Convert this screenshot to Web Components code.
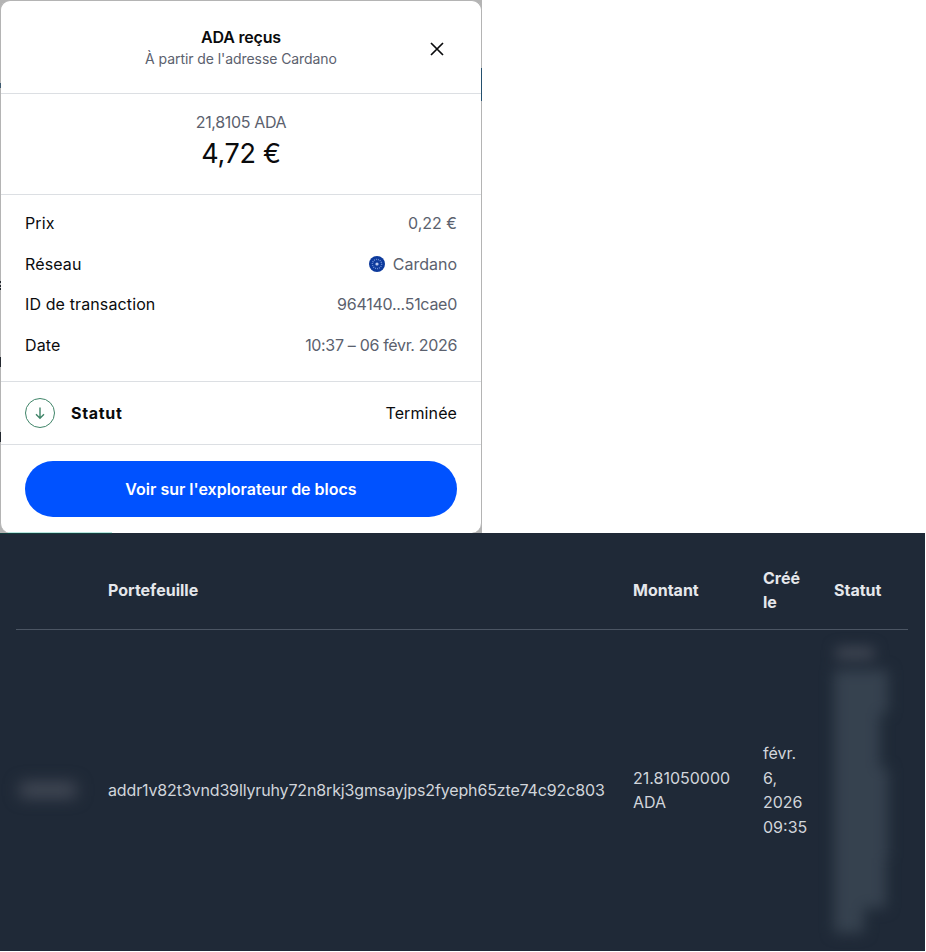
<!DOCTYPE html>
<html lang="fr">
<head>
<meta charset="utf-8">
<title>ADA reçus</title>
<style>
    html, body { margin: 0; padding: 0; background: #fff; }
    body { width: 926px; height: 952px; overflow: hidden; font-family: Inter, "Liberation Sans", sans-serif; }
</style>
</head>
<body>
<tx-modal>
    <detail-row label="Prix">0,22 €</detail-row>
    <detail-row label="Réseau"><cardano-icon></cardano-icon>Cardano</detail-row>
    <detail-row label="ID de transaction" tight="-0.27px">964140...51cae0</detail-row>
    <detail-row label="Date" tight="-0.33px">10:37 – 06 févr. 2026</detail-row>
</tx-modal>
<wallet-table></wallet-table>

<script>
const txModalTemplate = document.createElement('template');
txModalTemplate.innerHTML = `
    <style>
        :host {
            display: block;
            height: 533px;
            background-color: white;
            font-family: Inter, "Liberation Sans", sans-serif;
            position: relative;
        }

        .frame {
            width: 482px;
            height: 533px;
            background-color: #b4b4b4;
        }

        .edge {
            position: absolute;
            left: 481px;
            top: 68px;
            width: 1px;
            height: 33px;
            background-color: #24506e;
            z-index: 1;
        }

        .mark {
            position: absolute;
            left: 0;
            width: 1px;
            background-color: #23282f;
            z-index: 1;
        }

        .tab {
            position: absolute;
            left: 8px;
            bottom: 0;
            width: 104px;
            height: 1px;
            background-color: #b9e6df;
        }

        .modal {
            width: 482px;
            height: 533px;
            box-sizing: border-box;
            border: 1px solid #b4b4b4;
            border-bottom: none;
            border-radius: 10px;
            background-color: white;
            display: flex;
            flex-direction: column;
        }

        .head {
            height: 93px;
            flex: none;
            box-sizing: border-box;
            padding-top: 25px;
            text-align: center;
            border-bottom: 1px solid #dcdfe3;
            position: relative;
        }

        .head h1 {
            margin: 0;
            font-size: 16px;
            line-height: 22px;
            font-weight: 600;
            letter-spacing: -0.2px;
            color: #0a0b0d;
        }

        .head p {
            margin: 0;
            font-size: 14px;
            line-height: 21px;
            letter-spacing: -0.07px;
            color: #5b616e;
        }

        .close {
            position: absolute;
            left: 428px;
            top: 40px;
            width: 16px;
            height: 16px;
        }

        .amount {
            height: 101px;
            flex: none;
            box-sizing: border-box;
            padding-top: 18px;
            text-align: center;
            border-bottom: 1px solid #dcdfe3;
        }

        .amount .crypto {
            font-size: 16px;
            line-height: 21px;
            letter-spacing: -0.35px;
            color: #5b616e;
        }

        .amount .fiat {
            font-size: 27px;
            line-height: 42px;
            letter-spacing: -0.3px;
            color: #0a0b0d;
        }

        .rows {
            height: 187px;
            flex: none;
            box-sizing: border-box;
            padding: 7.6px 24px 0;
            border-bottom: 1px solid #dcdfe3;
        }

        .status {
            height: 63px;
            flex: none;
            box-sizing: border-box;
            padding: 0 24px;
            display: flex;
            align-items: center;
            gap: 16px;
            border-bottom: 1px solid #dcdfe3;
            font-size: 16px;
            color: #0a0b0d;
        }

        .status svg {
            width: 30px;
            height: 30px;
            flex: none;
        }

        .status b {
            font-weight: 700;
            letter-spacing: 0.7px;
            flex: 1;
        }

        .status span {
            letter-spacing: 0.1px;
        }

        .foot {
            padding: 16px 24px 0;
        }

        .foot button {
            width: 100%;
            height: 56px;
            display: block;
            border: none;
            border-radius: 28px;
            background-color: #0052ff;
            color: white;
            font: 600 16px Inter, "Liberation Sans", sans-serif;
        }
    </style>
    <div class="edge"></div>
    <div class="mark" style="top:83px;height:5px;background:#3d5a70"></div>
    <div class="mark" style="top:281px;height:2px"></div>
    <div class="mark" style="top:285px;height:2px"></div>
    <div class="mark" style="top:288px;height:2px"></div>
    <div class="mark" style="top:357px;height:10px"></div>
    <div class="mark" style="top:432px;height:10px"></div>
    <div class="frame">
        <div class="modal">
            <div class="head">
                <h1>ADA reçus</h1>
                <p>À partir de l'adresse Cardano</p>
                <svg class="close" viewBox="0 0 16 16" fill="none" stroke="#0a0b0d" stroke-width="1.7">
                    <path d="M2 2L14 14M14 2L2 14"/>
                </svg>
            </div>
            <div class="amount">
                <div class="crypto">21,8105 ADA</div>
                <div class="fiat">4,72 €</div>
            </div>
            <div class="rows"><slot></slot></div>
            <div class="status">
                <svg viewBox="0 0 30 30" fill="none">
                    <circle cx="15" cy="15" r="14.5" stroke="#3f8468"/>
                    <path d="M15 9.5V20M11 16.2L15 20.2L19 16.2" stroke="#3f8468" stroke-width="1.4"/>
                </svg>
                <b>Statut</b>
                <span>Terminée</span>
            </div>
            <div class="foot"><button>Voir sur l'explorateur de blocs</button></div>
        </div>
    </div>
    <div class="tab"></div>
`;

class TxModal extends HTMLElement {
    constructor(){
        super();
        this.attachShadow( { mode:"open" } );
        this.shadowRoot.appendChild( txModalTemplate.content.cloneNode( true ) );
    }
}

const detailRowTemplate = document.createElement('template');
detailRowTemplate.innerHTML = `
    <style>
        :host {
            display: flex;
            justify-content: space-between;
            align-items: center;
            height: 40.7px;
            font-size: 16px;
            color: #0a0b0d;
        }

        .label {
            letter-spacing: 0.12px;
        }

        .value {
            display: flex;
            align-items: center;
            gap: 8px;
            color: #5b616e;
        }
    </style>
    <span class="label"></span>
    <span class="value"><slot></slot></span>
`;

class DetailRow extends HTMLElement {
    constructor(){
        super();
        this.attachShadow( { mode:"open" } );
        this.shadowRoot.appendChild( detailRowTemplate.content.cloneNode( true ) );
    }

    connectedCallback() {
        this.shadowRoot.querySelector('.label').textContent = this.getAttribute('label');

        if ( this.attributes.tight ) {
            this.shadowRoot.querySelector('.value').style.letterSpacing = this.attributes.tight.value;
        }
    }
}

class CardanoIcon extends HTMLElement {
    constructor(){
        super();
        this.attachShadow( { mode:"open" } );
        this.shadowRoot.innerHTML = `
            <style>
                :host { display: block; width: 16px; height: 16px; }
                svg { display: block; }
            </style>
            <svg width="16" height="16" viewBox="0 0 16 16">
                <circle cx="8" cy="8" r="8" fill="#0d3a9c"/>
                <circle cx="8" cy="8" r="4.6" fill="none" stroke="#6f8fd6" stroke-width="1.4" stroke-dasharray="1 1"/>
                <circle cx="8" cy="8" r="1.6" fill="#b9c9ef"/>
            </svg>
        `;
    }
}

const walletTableTemplate = document.createElement('template');
walletTableTemplate.innerHTML = `
    <style>
        :host {
            display: block;
            width: 925px;
            height: 418px;
            box-sizing: border-box;
            padding: 0 17px 0 16px;
            background-color: #1f2937;
            color: #d1d5db;
            font-family: Inter, "Liberation Sans", sans-serif;
            font-size: 16px;
            line-height: 24.5px;
            position: relative;
            overflow: hidden;
        }

        .tab {
            position: absolute;
            left: 0;
            top: 0;
            width: 112px;
            height: 1px;
            background-color: #14403f;
        }

        .grid {
            display: grid;
            grid-template-columns: 92px 525px 130px 71px 1fr;
        }

        .th {
            height: 97px;
            box-sizing: border-box;
            padding-top: 18px;
            display: flex;
            align-items: center;
            font-weight: 700;
            color: #e5e7eb;
            border-bottom: 1px solid #4b5563;
        }

        .td {
            height: 320px;
            box-sizing: border-box;
            padding-right: 16px;
            display: flex;
            align-items: center;
        }

        .td.addr {
            letter-spacing: -0.14px;
        }

        .td.date {
            padding-right: 24px;
        }

        .blur-id {
            width: 56px;
            height: 14px;
            margin-left: 4px;
            background-color: #474d59;
            filter: blur(8px);
        }

        .blur-status {
            display: flex;
            flex-direction: column;
            width: 58px;
            filter: blur(7px);
        }

        .blur-status i { display: block; background-color: #36424f; }
    </style>
    <div class="tab"></div>
    <div class="grid">
        <div class="th"></div>
        <div class="th">Portefeuille</div>
        <div class="th">Montant</div>
        <div class="th">Créé<br>le</div>
        <div class="th">Statut</div>
        <div class="td"><div class="blur-id"></div></div>
        <div class="td addr">addr1v82t3vnd39llyruhy72n8rkj3gmsayjps2fyeph65zte74c92c803</div>
        <div class="td">21.81050000 ADA</div>
        <div class="td date">févr. 6, 2026 09:35</div>
        <div class="td">
            <div class="blur-status">
                <i style="height:10px;width:38px;margin:0 0 12px 2px;background:#474d59"></i>
                <i style="height:43px;width:54px"></i>
                <i style="height:55px;width:46px"></i>
                <i style="height:40px;width:54px"></i>
                <i style="height:50px;width:54px"></i>
                <i style="height:50px;width:52px"></i>
                <i style="height:25px;width:30px"></i>
            </div>
        </div>
    </div>
`;

class WalletTable extends HTMLElement {
    constructor(){
        super();
        this.attachShadow( { mode:"open" } );
        this.shadowRoot.appendChild( walletTableTemplate.content.cloneNode( true ) );
    }
}

window.customElements.define( 'tx-modal', TxModal );
window.customElements.define( 'detail-row', DetailRow );
window.customElements.define( 'cardano-icon', CardanoIcon );
window.customElements.define( 'wallet-table', WalletTable );
</script>
</body>
</html>
